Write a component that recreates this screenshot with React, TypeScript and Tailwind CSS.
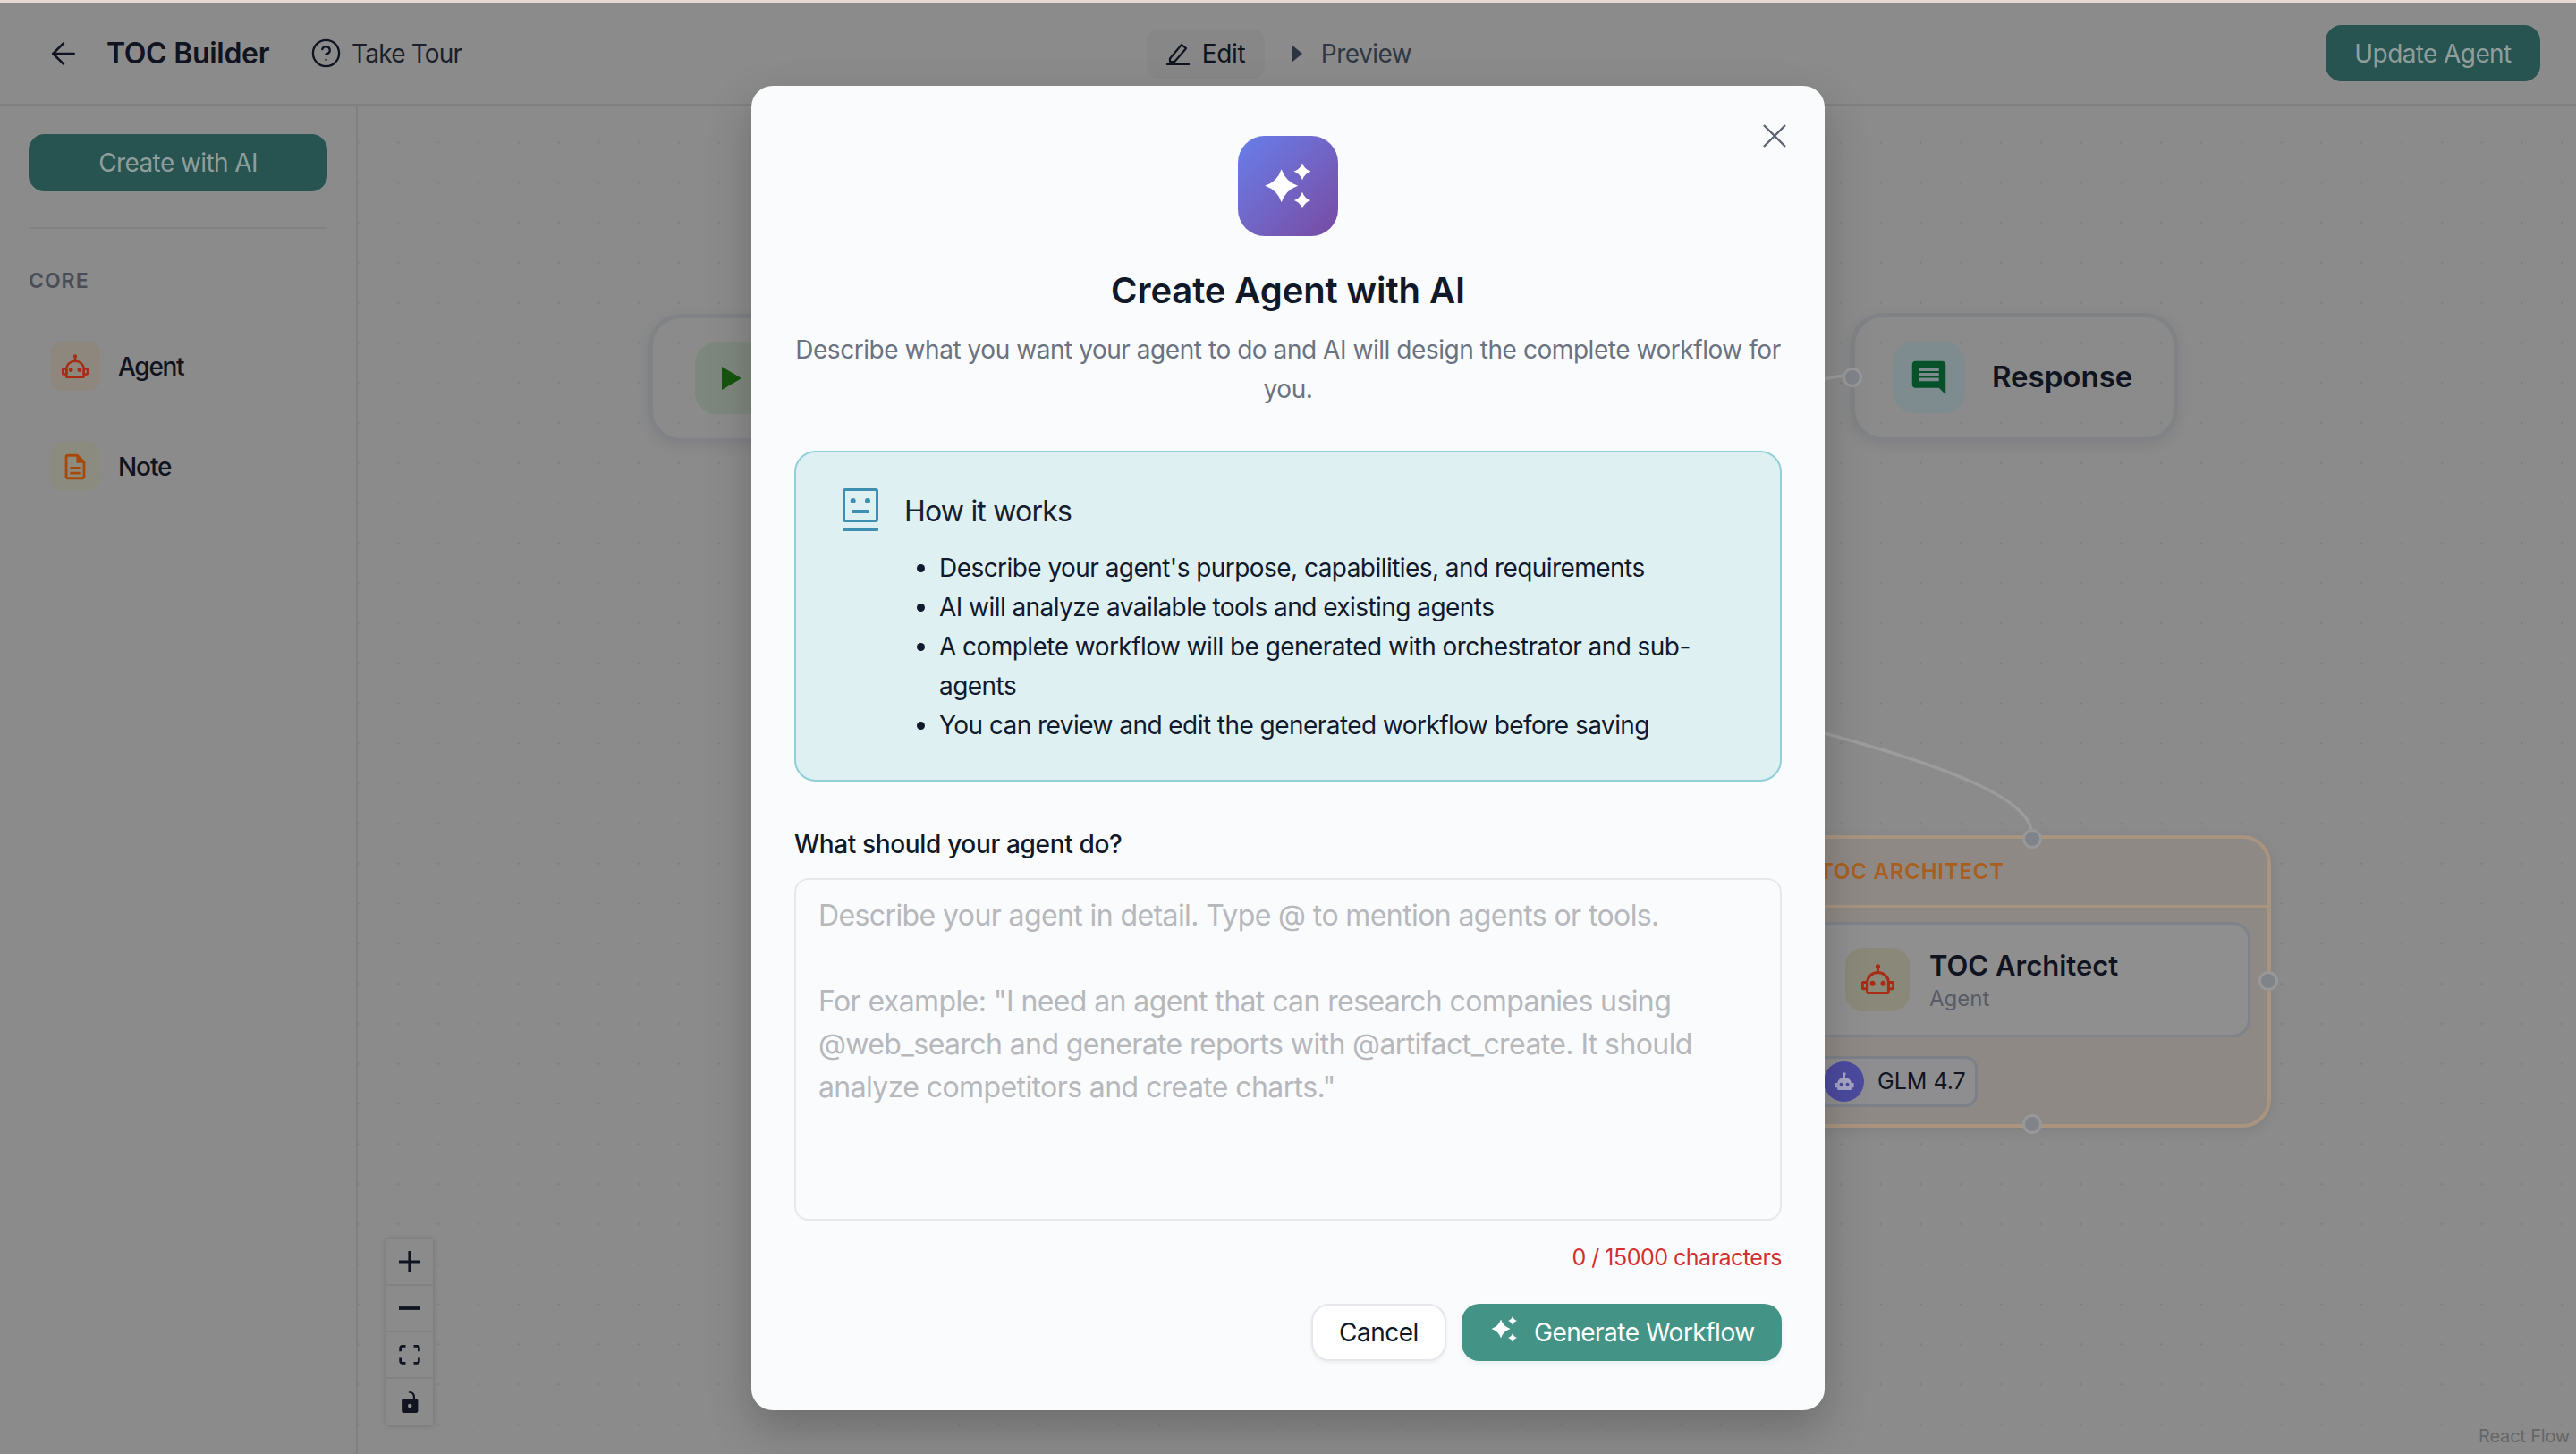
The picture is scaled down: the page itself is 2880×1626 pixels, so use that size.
import React from 'react';
import { ArrowLeft, CircleHelp } from 'lucide-react';
import { MdComment, MdOutlineDescription } from 'react-icons/md';

// four point star used by the AI sparkle icons
const star = (x: number, y: number, r: number) => {
  const k = r * 0.25;
  return `M${x} ${y - r}Q${x + k} ${y - k} ${x + r} ${y}Q${x + k} ${y + k} ${x} ${y + r}Q${x - k} ${y + k} ${x - r} ${y}Q${x - k} ${y - k} ${x} ${y - r}Z`;
};

const Robot = ({ width, color }: { width: number; color: string }) => (
  <svg width={width} height={width * 0.93} viewBox="0 0 112 104" fill="none" stroke={color} strokeWidth="9">
    <circle cx="56" cy="9" r="8" fill={color} stroke="none" />
    <path d="M56 14v16" />
    <path d="M20 62a36 33 0 0 1 72 0v32a4 4 0 0 1-4 4H24a4 4 0 0 1-4-4z" />
    <rect x="4" y="62" width="16" height="22" rx="3" />
    <rect x="92" y="62" width="16" height="22" rx="3" />
    <circle cx="38" cy="66" r="9" fill={color} stroke="none" />
    <circle cx="74" cy="66" r="9" fill={color} stroke="none" />
  </svg>
);

const RobotSolid = () => (
  <svg width="22" height="21" viewBox="0 0 112 104" fill="#a6a6c6">
    <circle cx="56" cy="9" r="9" />
    <rect x="51" y="12" width="10" height="20" />
    <path d="M16 64a40 36 0 0 1 80 0v30a6 6 0 0 1-6 6H22a6 6 0 0 1-6-6z" />
    <rect x="2" y="60" width="16" height="26" rx="4" />
    <rect x="94" y="60" width="16" height="26" rx="4" />
    <circle cx="38" cy="68" r="10" fill="#4c4a9e" />
    <circle cx="74" cy="68" r="10" fill="#4c4a9e" />
  </svg>
);

const Handle = ({ className }: { className: string }) => (
  <div className={`absolute h-[22px] w-[22px] rounded-full border-[3px] border-[#989898] bg-[#80848a] ${className}`}></div>
);

const App: React.FC = () => {
  return (
    <div className="relative h-[1626px] w-[2880px] overflow-hidden bg-[#8b8b8b] font-[Inter,sans-serif] text-[#0f1420]">
      <div className="h-[3px] bg-[#e9d8d2]"></div>

      {/* Top bar */}
      <header className="flex h-[115px] items-center border-b-2 border-[#808080] pl-[51px] pr-[40px]">
        <div className="flex flex-1 items-center">
          <ArrowLeft size={40} strokeWidth={1.5} />
          <span className="ml-[28px] text-[32px] font-semibold tracking-[-0.3px]">TOC Builder</span>
          <CircleHelp size={35} strokeWidth={1.6} className="ml-[46px]" />
          <span className="ml-[11px] text-[28px] tracking-[-0.8px] text-[#1b202b]">Take Tour</span>
        </div>
        <div className="mr-[9px] flex items-center gap-[8px]">
          <div className="flex h-[56px] w-[132px] items-center gap-[14px] rounded-[14px] bg-[#878787] pl-[22px]">
            <svg width="26" height="26" viewBox="0 0 26 26" fill="none" stroke="#0f1420" strokeWidth="2.2">
              <path d="M4 18.5 17 3l5 4.2L9.2 22H4z" strokeLinejoin="round" />
              <path d="M0 25h26" />
            </svg>
            <span className="text-[28px] tracking-[-0.3px]">Edit</span>
          </div>
          <div className="flex h-[56px] items-center gap-[21px] pl-[22px] pr-[22px] text-[#303844]">
            <svg width="12" height="20" viewBox="0 0 12 20">
              <path d="M0 0l12 10L0 20z" fill="#2b3440" />
            </svg>
            <span className="text-[28px] tracking-[-0.5px]">Preview</span>
          </div>
        </div>
        <div className="flex flex-1 justify-end">
          <button className="flex h-[63px] w-[240px] items-center justify-center rounded-[18px] bg-[#275350] text-[28px] tracking-[-0.6px] text-[#8f9e9b]">
            Update Agent
          </button>
        </div>
      </header>

      <div className="flex h-[1508px]">
        {/* Palette */}
        <aside className="w-[400px] shrink-0 border-r-2 border-[#808080] px-[32px] pt-[32px]">
          <button className="flex h-[64px] w-full items-center justify-center rounded-[18px] bg-[#275350] text-[28px] tracking-[-0.6px] text-[#8f9e9b]">
            Create with AI
          </button>
          <div className="mt-[40px] h-[2px] bg-[#838383]"></div>
          <div className="mt-[44px] text-[23px] font-semibold leading-[28px] tracking-[1px] text-[#4a4d55]">CORE</div>
          <div className="mt-[54px] flex flex-col gap-[57px] pl-[24px]">
            <div className="flex items-center gap-[20px]">
              <div className="flex h-[55px] w-[56px] items-center justify-center rounded-[14px] bg-[#8d877d]">
                <Robot width={30} color="#a82c14" />
              </div>
              <span className="text-[28px] font-medium tracking-[-1.3px]">Agent</span>
            </div>
            <div className="flex items-center gap-[20px]">
              <div className="flex h-[55px] w-[56px] items-center justify-center rounded-[14px] bg-[#8b8c7f]">
                <MdOutlineDescription size={34} color="#a84808" />
              </div>
              <span className="text-[28px] font-medium tracking-[-1.1px]">Note</span>
            </div>
          </div>
        </aside>

        {/* Flow canvas */}
        <main className="relative flex-1 bg-[radial-gradient(circle,#7f7f7f_1.4px,transparent_1.4px)] bg-[size:44.8px_44.8px] bg-[position:-21.9px_19px]">
          <svg className="absolute left-0 top-0" width="2480" height="1508" fill="none" stroke="#9c9c9c" strokeWidth="3.5">
            <path d="M1640 702C1750 732 1868 770 1871 812" />
            <path d="M1640 306C1650 303 1660 302 1670 302" />
          </svg>

          {/* Start */}
          <div className="absolute left-[325px] top-[233px] flex h-[144px] w-[400px] items-center rounded-[36px] border-[5px] border-[#808286] pl-[47px] shadow-[0_4px_14px_rgba(0,0,0,0.08)]">
            <div className="flex h-[80px] w-[81px] items-center justify-center rounded-[24px] bg-[#7e877d]">
              <svg width="22" height="26" viewBox="0 0 22 26">
                <path d="M0 0l22 13L0 26z" fill="#15550f" />
              </svg>
            </div>
          </div>

          {/* Response */}
          <div className="absolute left-[1669px] top-[232px] flex h-[144px] w-[366px] items-center gap-[30px] rounded-[36px] border-[5px] border-[#808286] pl-[42px] shadow-[0_4px_14px_rgba(0,0,0,0.08)]">
            <div className="flex h-[80px] w-[81px] items-center justify-center rounded-[24px] bg-[#7f8c8f]">
              <MdComment size={45} color="#06502a" />
            </div>
            <span className="text-[33px] font-semibold">Response</span>
            <Handle className="left-[-14px] top-[56px]" />
          </div>

          {/* Agent group */}
          <div className="absolute left-[1500px] top-[816px] h-[327px] w-[639px] rounded-[32px] border-[4px] border-[#a99480] bg-[#8f8985] shadow-[0_4px_14px_rgba(0,0,0,0.08)]">
            <div className="flex h-[77px] items-center border-b-[3px] border-[#a8937f] pl-[130px] text-[24px] font-semibold tracking-[0.8px] text-[#a85f1e]">
              TOC ARCHITECT
            </div>
            <div className="ml-[100px] mr-[19px] mt-[16px] flex h-[129px] items-center gap-[22px] rounded-[20px] border-[3px] border-[#7f8389] bg-[#8f8f90] pl-[56px]">
              <div className="flex h-[71px] w-[72px] items-center justify-center rounded-[20px] bg-[#8a8878]">
                <Robot width={37} color="#a82c14" />
              </div>
              <div>
                <div className="text-[31px] font-semibold leading-[42px]">TOC Architect</div>
                <div className="text-[24px] leading-[32px] text-[#585c66]">Agent</div>
              </div>
            </div>
            <div className="ml-[100px] mt-[21px] flex h-[57px] w-[207px] items-center gap-[15px] rounded-[14px] border-[3px] border-[#7d8088] bg-[#8e8e90] pl-[32px]">
              <div className="flex h-[45px] w-[45px] shrink-0 items-center justify-center rounded-full bg-[#4c4a9e]">
                <RobotSolid />
              </div>
              <span className="text-[25px] text-[#11151f]">GLM 4.7</span>
            </div>
            <Handle className="left-[357px] top-[-11px]" />
            <Handle className="left-[357px] top-[308px]" />
            <Handle className="right-[-12px] top-[148px]" />
          </div>

          {/* Zoom controls */}
          <div className="absolute left-[32px] top-[1268px] w-[52px] bg-[#8b8b8b] shadow-[0_0_6px_rgba(0,0,0,0.2)]">
            <div className="flex h-[52px] items-center justify-center border-b-2 border-[#828282]">
              <svg width="24" height="24" viewBox="0 0 32 32">
                <path d="M32 18.133H18.133V32h-4.266V18.133H0v-4.266h13.867V0h4.266v13.867H32z" fill="#0f1420" />
              </svg>
            </div>
            <div className="flex h-[52px] items-center justify-center border-b-2 border-[#828282]">
              <svg width="24" height="4" viewBox="0 0 32 5">
                <path d="M0 0h32v5H0z" fill="#0f1420" />
              </svg>
            </div>
            <div className="flex h-[52px] items-center justify-center border-b-2 border-[#828282]">
              <svg width="24" height="22" viewBox="0 0 32 30">
                <path
                  d="M3.692 4.63c0-.53.4-.938.939-.938h5.215V0H4.708C2.13 0 0 2.054 0 4.63v5.216h3.692V4.631zM27.354 0h-5.2v3.692h5.17c.53 0 .984.4.984.939v5.215H32V4.631A4.624 4.624 0 0027.354 0zm.954 24.83c0 .532-.4.94-.939.94h-5.215v3.768h5.215c2.577 0 4.631-2.13 4.631-4.707v-5.139h-3.692v5.139zm-23.677.94c-.531 0-.939-.4-.939-.94v-5.138H0v5.139c0 2.577 2.13 4.707 4.708 4.707h5.138V25.77H4.631z"
                  fill="#0f1420"
                />
              </svg>
            </div>
            <div className="flex h-[52px] items-center justify-center">
              <svg width="19" height="24" viewBox="0 0 25 32">
                <path
                  d="M21.333 10.667H19.81V7.619C19.81 3.429 16.38 0 12.19 0c-4.114 1.828-1.37 2.133.305 2.438 1.676.305 4.42 2.59 4.42 5.181v3.048H3.047A3.056 3.056 0 000 13.714v15.238A3.056 3.056 0 003.048 32h18.285a3.056 3.056 0 003.048-3.048V13.714a3.056 3.056 0 00-3.048-3.047zM12.19 24.533a3.056 3.056 0 01-3.047-3.047 3.056 3.056 0 013.047-3.048 3.056 3.056 0 013.048 3.048 3.056 3.056 0 01-3.048 3.047z"
                  fill="#0f1420"
                />
              </svg>
            </div>
          </div>

          <div className="absolute bottom-[8px] right-[7px] text-[20px] leading-[24px] tracking-[-0.2px] text-[#666666]">React Flow</div>
        </main>
      </div>

      {/* Modal */}
      <div className="absolute inset-0 flex justify-center pt-[96px]">
        <div className="relative h-[1481px] w-[1200px] rounded-[24px] bg-[#fafbfd] px-[48px] pt-[56px] shadow-[0_20px_50px_rgba(0,0,0,0.22)]">
          <svg className="absolute right-[43px] top-[43px]" width="26" height="26" viewBox="0 0 26 26" fill="none" stroke="#5b6475" strokeWidth="2.4">
            <path d="M1 1l24 24M25 1 1 25" />
          </svg>

          <div className="mx-auto flex h-[112px] w-[112px] rounded-[30px] bg-gradient-to-br from-[#667eea] to-[#764ba2]">
            <svg width="112" height="112" viewBox="0 0 112 112" fill="#ffffff">
              <path d={star(48.7, 55.7, 18.5)} />
              <path d={star(72, 39.7, 9.5)} />
              <path d={star(72, 72, 9.2)} />
            </svg>
          </div>
          <h2 className="mt-[33px] text-center text-[40px] font-semibold leading-[56px] tracking-[-0.1px] text-[#111827]">Create Agent with AI</h2>
          <p className="mt-[16px] text-center text-[28px] leading-[44px] tracking-[-0.45px] text-[#6b7280]">
            Describe what you want your agent to do and AI will design the complete workflow for you.
          </p>

          <div className="mt-[47px] h-[370px] rounded-[24px] border-2 border-[#8fd0d9] bg-[#dff0f3] pl-[52px] pr-[48px] pt-[40px]">
            <div className="flex items-center gap-[29px]">
              <svg width="40" height="48" viewBox="0 0 40 48" className="shrink-0">
                <rect x="1.5" y="1.5" width="37" height="35" rx="1.5" fill="none" stroke="#3f8fb0" strokeWidth="3" />
                <circle cx="11.7" cy="14" r="3" fill="#3f8fb0" />
                <circle cx="28" cy="14" r="3" fill="#3f8fb0" />
                <rect x="11" y="24" width="18" height="4" fill="#3f8fb0" />
                <rect x="0" y="44" width="40" height="4" rx="1" fill="#3f8fb0" />
              </svg>
              <span className="translate-y-[2px] text-[32px] leading-[48px] tracking-[-0.8px] text-[#15202f]">How it works</span>
            </div>
            <ul className="ml-[108px] mt-[19px] list-disc text-[28px] leading-[44px] tracking-[-0.55px] text-[#111a2c]">
              <li>Describe your agent's purpose, capabilities, and requirements</li>
              <li>AI will analyze available tools and existing agents</li>
              <li>A complete workflow will be generated with orchestrator and sub-agents</li>
              <li>You can review and edit the generated workflow before saving</li>
            </ul>
          </div>

          <label className="mt-[48px] block text-[28px] font-medium leading-[44px] tracking-[-0.35px] text-[#111827]">What should your agent do?</label>
          <textarea
            readOnly
            className="mt-[16px] block h-[383px] w-full resize-none rounded-[16px] border-2 border-[#e6e8ec] bg-transparent px-[25px] py-[16px] text-[32px] leading-[48px] tracking-[-0.6px] outline-none placeholder:text-[#b6b8bc]"
            placeholder={'Describe your agent in detail. Type @ to mention agents or tools.\n\nFor example: "I need an agent that can research companies using @web_search and generate reports with @artifact_create. It should analyze competitors and create charts."'}
          />
          <div className="mt-[25px] text-right text-[25px] leading-[32px] tracking-[-0.5px] text-[#d32f2f]">0 / 15000 characters</div>

          <div className="mt-[36px] flex justify-end gap-[17px]">
            <button className="h-[64px] w-[151px] rounded-[20px] border-2 border-[#e5e7eb] bg-white text-[28px] tracking-[-0.5px] text-[#111827] shadow-[0_2px_4px_rgba(0,0,0,0.06)]">
              Cancel
            </button>
            <button className="flex h-[64px] w-[358px] items-center gap-[18px] rounded-[20px] bg-[#439486] pl-[33px] text-[28px] tracking-[-0.5px] text-white shadow-[0_3px_6px_rgba(67,148,134,0.1)]">
              <svg width="30" height="30" viewBox="0 0 30 30" fill="#ffffff" className="shrink-0 -translate-y-[4px]">
                <path d={star(11, 15, 10.5)} />
                <path d={star(24, 6, 5)} />
                <path d={star(24, 25, 5)} />
              </svg>
              Generate Workflow
            </button>
          </div>
        </div>
      </div>
    </div>
  );
};

export default App;
